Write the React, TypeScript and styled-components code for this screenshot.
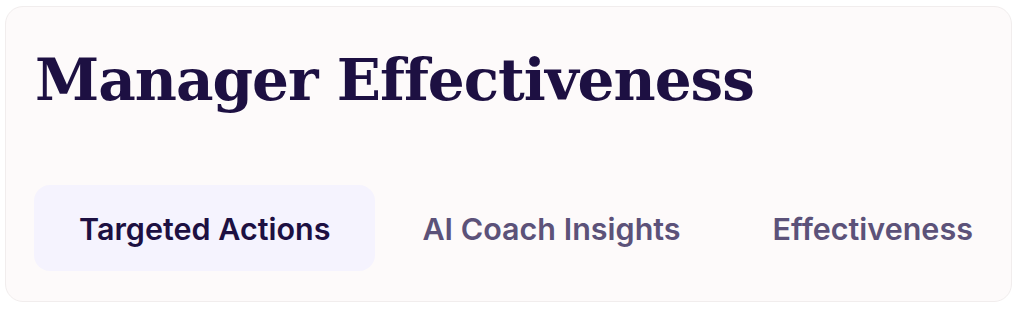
import styled, { createGlobalStyle } from 'styled-components'

const GlobalStyle = createGlobalStyle`
  html, body {
    margin: 0;
    padding: 0;
    background: #ffffff;
  }
`

const Page = styled.div`
  padding: 6px 6px 0 5px;
`

const Card = styled.section`
  box-sizing: border-box;
  height: 296px;
  padding: 37px 28px 0 28px;
  background: #fdfafa;
  border: 1px solid #f1eded;
  border-radius: 18px;
`

const Title = styled.h1`
  margin: 0 0 0 1px;
  font-family: 'DejaVu Serif', 'Liberation Serif', serif;
  font-weight: 700;
  font-size: 58px;
  line-height: 72px;
  color: #1d1042;
  letter-spacing: -1px;
`

const Tabs = styled.nav`
  display: flex;
  gap: 2px;
  margin-top: 69px;
`

const Tab = styled.button<{ $active?: boolean }>`
  height: 86px;
  padding: 0 45px;
  border: none;
  border-radius: 16px;
  background: ${(p) => (p.$active ? '#f5f3fe' : 'transparent')};
  color: ${(p) => (p.$active ? '#1d1042' : '#5c5279')};
  font-family: Inter, 'Noto Sans', sans-serif;
  font-weight: 600;
  font-size: 30.5px;
  white-space: nowrap;
  cursor: pointer;
`

export default function App() {
  return (
    <Page>
      <GlobalStyle />
      <Card>
        <Title>Manager Effectiveness</Title>
        <Tabs>
          <Tab $active>Targeted Actions</Tab>
          <Tab>AI Coach Insights</Tab>
          <Tab>Effectiveness</Tab>
        </Tabs>
      </Card>
    </Page>
  )
}
